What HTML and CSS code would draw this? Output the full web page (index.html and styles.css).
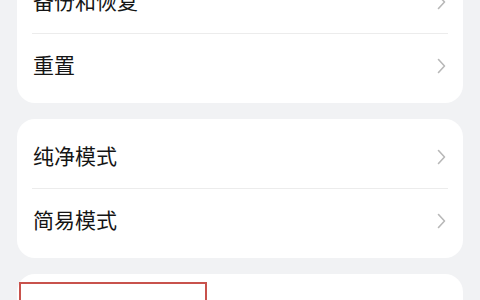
FILE: index.html
```html
<!DOCTYPE html>
<html lang="zh-CN">
<head>
<meta charset="utf-8">
<link rel="stylesheet" href="styles.css">
</head>
<body>
<div class="page">
  <div class="card">
    <div class="row"><span class="label">备份和恢复</span><svg class="chev" viewBox="0 0 9 16"><path d="M1.5 1.5 L7.5 8 L1.5 14.5"/></svg></div>
    <div class="divider"></div>
    <div class="row"><span class="label">重置</span><svg class="chev" viewBox="0 0 9 16"><path d="M1.5 1.5 L7.5 8 L1.5 14.5"/></svg></div>
  </div>
  <div class="card">
    <div class="row"><span class="label">纯净模式</span><svg class="chev" viewBox="0 0 9 16"><path d="M1.5 1.5 L7.5 8 L1.5 14.5"/></svg></div>
    <div class="divider"></div>
    <div class="row"><span class="label">简易模式</span><svg class="chev" viewBox="0 0 9 16"><path d="M1.5 1.5 L7.5 8 L1.5 14.5"/></svg></div>
  </div>
  <div class="card">
    <div class="row"></div>
  </div>
</div>
<div class="highlight"></div>
</body>
</html>
```
FILE: styles.css
```css
html, body {
  margin: 0;
  padding: 0;
  background: #f1f2f4;
  overflow: hidden;
  height: 300px;
}
.page {
  display: flex;
  flex-direction: column;
  gap: 16px;
  padding: 0 17px;
  margin-top: -36px;
  font-family: "Noto Sans CJK SC", "Noto Sans", sans-serif;
}
.card {
  background: #ffffff;
  border-radius: 18px;
  padding: 6px 15px;
}
.row {
  height: 63px;
  display: flex;
  align-items: center;
  justify-content: space-between;
}
.label {
  font-size: 21px;
  line-height: 1;
  font-weight: 400;
  color: #151515;
  padding-left: 1px;
  margin-bottom: 2px;
}
.chev {
  width: 9px;
  height: 16px;
  margin-right: 2px;
  fill: none;
  stroke: #b8b8b8;
  stroke-width: 1.6;
  stroke-linecap: round;
  stroke-linejoin: round;
}
.divider {
  height: 1px;
  background: #ececec;
}
.highlight {
  position: absolute;
  left: 19px;
  top: 282px;
  width: 184px;
  height: 40px;
  border: 2px solid #c8524c;
}
```
